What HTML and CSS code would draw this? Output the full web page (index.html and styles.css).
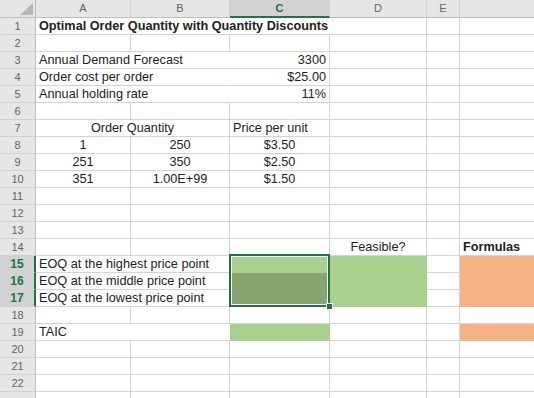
FILE: index.html
```html
<!DOCTYPE html>
<html>
<head>
    <meta charset="UTF-8">
    <link rel="stylesheet" href="styles.css">
</head>
<body>
    <div class="sheet">
        <!-- column headers -->
        <div class="corner">
            <svg width="35" height="17" viewBox="0 0 35 17"><polygon points="20,15 33,15 33,3" fill="#b7b7b7"/></svg>
        </div>
        <div class="ch">A</div>
        <div class="ch">B</div>
        <div class="ch ch-active">C</div>
        <div class="ch">D</div>
        <div class="ch">E</div>
        <div class="ch"></div>

        <!-- 1 -->
        <div class="rh">1</div>
        <div class="c span3 open bold">Optimal Order Quantity with Quantity Discounts</div>
        <div class="c"></div><div class="c"></div><div class="c"></div>

        <!-- 2 -->
        <div class="rh">2</div>
        <div class="c"></div><div class="c"></div><div class="c"></div><div class="c"></div><div class="c"></div><div class="c"></div>

        <!-- 3 -->
        <div class="rh">3</div>
        <div class="c span2 open">Annual Demand Forecast</div>
        <div class="c right">3300</div>
        <div class="c"></div><div class="c"></div><div class="c"></div>

        <!-- 4 -->
        <div class="rh">4</div>
        <div class="c span2 open">Order cost per order</div>
        <div class="c right">$25.00</div>
        <div class="c"></div><div class="c"></div><div class="c"></div>

        <!-- 5 -->
        <div class="rh">5</div>
        <div class="c span2 open">Annual holding rate</div>
        <div class="c right">11%</div>
        <div class="c"></div><div class="c"></div><div class="c"></div>

        <!-- 6 -->
        <div class="rh">6</div>
        <div class="c"></div><div class="c"></div><div class="c"></div><div class="c"></div><div class="c"></div><div class="c"></div>

        <!-- 7 -->
        <div class="rh">7</div>
        <div class="c span2 center">Order Quantity</div>
        <div class="c">Price per unit</div>
        <div class="c"></div><div class="c"></div><div class="c"></div>

        <!-- 8 -->
        <div class="rh">8</div>
        <div class="c center">1</div>
        <div class="c center">250</div>
        <div class="c center">$3.50</div>
        <div class="c"></div><div class="c"></div><div class="c"></div>

        <!-- 9 -->
        <div class="rh">9</div>
        <div class="c center">251</div>
        <div class="c center">350</div>
        <div class="c center">$2.50</div>
        <div class="c"></div><div class="c"></div><div class="c"></div>

        <!-- 10 -->
        <div class="rh">10</div>
        <div class="c center">351</div>
        <div class="c center">1.00E+99</div>
        <div class="c center">$1.50</div>
        <div class="c"></div><div class="c"></div><div class="c"></div>

        <!-- 11-13 -->
        <div class="rh">11</div>
        <div class="c"></div><div class="c"></div><div class="c"></div><div class="c"></div><div class="c"></div><div class="c"></div>
        <div class="rh">12</div>
        <div class="c"></div><div class="c"></div><div class="c"></div><div class="c"></div><div class="c"></div><div class="c"></div>
        <div class="rh">13</div>
        <div class="c"></div><div class="c"></div><div class="c"></div><div class="c"></div><div class="c"></div><div class="c"></div>

        <!-- 14 -->
        <div class="rh">14</div>
        <div class="c"></div><div class="c"></div><div class="c"></div>
        <div class="c center">Feasible?</div>
        <div class="c"></div>
        <div class="c bold">Formulas</div>

        <!-- 15-17 -->
        <div class="rh rh-active">15</div>
        <div class="c span2 open">EOQ at the highest price point</div>
        <div class="c fill-green"></div>
        <div class="c fill-green rows3"></div>
        <div class="c"></div>
        <div class="c fill-orange rows3"></div>

        <div class="rh rh-active">16</div>
        <div class="c span2 open">EOQ at the middle price point</div>
        <div class="c fill-selected"></div>
        <div class="c"></div>

        <div class="rh rh-active">17</div>
        <div class="c span2 open">EOQ at the lowest price point</div>
        <div class="c fill-selected"></div>
        <div class="c"></div>

        <!-- 18 -->
        <div class="rh">18</div>
        <div class="c"></div><div class="c"></div><div class="c"></div><div class="c"></div><div class="c"></div><div class="c"></div>

        <!-- 19 -->
        <div class="rh">19</div>
        <div class="c span2 open">TAIC</div>
        <div class="c fill-green"></div>
        <div class="c"></div><div class="c"></div>
        <div class="c fill-orange"></div>

        <!-- 20-23 -->
        <div class="rh">20</div>
        <div class="c"></div><div class="c"></div><div class="c"></div><div class="c"></div><div class="c"></div><div class="c"></div>
        <div class="rh">21</div>
        <div class="c"></div><div class="c"></div><div class="c"></div><div class="c"></div><div class="c"></div><div class="c"></div>
        <div class="rh">22</div>
        <div class="c"></div><div class="c"></div><div class="c"></div><div class="c"></div><div class="c"></div><div class="c"></div>
        <div class="rh"></div>
        <div class="c"></div><div class="c"></div><div class="c"></div><div class="c"></div><div class="c"></div><div class="c"></div>

        <!-- selection box over C15:C17 -->
        <div class="selection"><span class="fill-handle"></span></div>
    </div>
</body>
</html>
```

FILE: styles.css
```css
body {
    margin: 0;
    background: #fff;
    font-family: "Liberation Sans", Arial, sans-serif;
}

.sheet {
    position: relative;
    display: grid;
    grid-template-columns: 36px 95px 99px 100px 97px 33px 100px;
    grid-template-rows: 18px;
    grid-auto-rows: 17px;
    width: 534px;
    height: 398px;
    overflow: hidden;
}

.corner,
.ch,
.rh {
    box-sizing: border-box;
    background: #e6e6e6;
    color: #646464;
    font-size: 11px;
    text-align: center;
}
.corner {
    border-right: 1px solid #bdbdbd;
    border-bottom: 1px solid #bdbdbd;
}
.corner svg {
    display: block;
}
.ch {
    border-right: 1px solid #d2d2d2;
    border-bottom: 1px solid #bdbdbd;
    line-height: 17px;
}
.ch-active {
    background: #d2d2d2;
    color: #217346;
    font-weight: bold;
    border-bottom: 2px solid #217346;
}
.rh {
    border-right: 1px solid #bdbdbd;
    border-bottom: 1px solid #d2d2d2;
    line-height: 16px;
}
.rh-active {
    background: #d2d2d2;
    color: #217346;
    font-weight: bold;
    font-size: 12px;
    border-right: 2px solid #217346;
}

.c {
    box-sizing: border-box;
    border-right: 1px solid #d4d4d4;
    border-bottom: 1px solid #d4d4d4;
    padding: 0 3px;
    font-size: 12.7px;
    line-height: 16px;
    color: #222;
    white-space: nowrap;
}
.span2 {
    grid-column: span 2;
}
.span3 {
    grid-column: span 3;
}
.rows3 {
    grid-row: span 3;
}
.open {
    border-right-color: transparent;
}
.bold {
    font-weight: bold;
}
.right {
    text-align: right;
}
.center {
    text-align: center;
}

.fill-green {
    background: #a9d08e;
    border-color: transparent;
}
.fill-selected {
    background: #87a36f;
    border-color: transparent;
}
.fill-orange {
    background: #f4b183;
    border-color: transparent;
}

.selection {
    position: absolute;
    left: 229px;
    top: 254px;
    width: 101px;
    height: 53px;
    box-sizing: border-box;
    border: 2px solid #217346;
    box-shadow: inset 0 0 0 1px #fff;
}
.fill-handle {
    position: absolute;
    right: -5px;
    bottom: -5px;
    width: 5px;
    height: 5px;
    background: #217346;
    border: 1px solid #fff;
}
```
